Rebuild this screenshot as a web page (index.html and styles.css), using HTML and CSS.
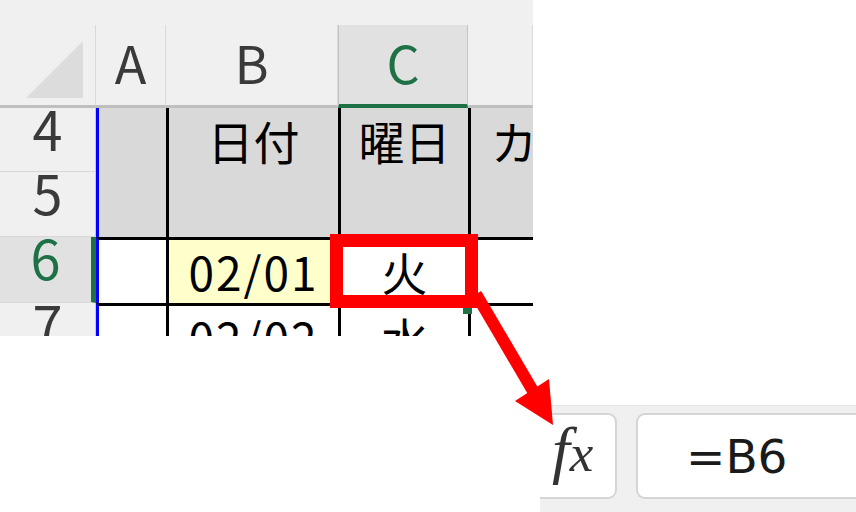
FILE: index.html
```html
<!DOCTYPE html>
<html lang="ja">
<head>
<meta charset="utf-8">
<title>Excel formula</title>
<link rel="stylesheet" href="styles.css">
</head>
<body>
<div class="page">
  <div class="sheet">
    <div class="strip"></div>
    <div class="corner"><svg class="tri" viewBox="0 0 57 57"><polygon points="0,57 57,57 57,0" fill="#dcdcdc"/></svg></div>
    <div class="colhdr">A</div>
    <div class="colhdr">B</div>
    <div class="colhdr sel">C</div>
    <div class="colhdr"></div>

    <div class="rowhdr">4</div>
    <div class="cell a merged"></div>
    <div class="cell b merged">日付</div>
    <div class="cell c merged">曜日</div>
    <div class="cell d merged">カレンダー</div>
    <div class="rowhdr">5</div>

    <div class="rowhdr sel">6</div>
    <div class="cell a rule"></div>
    <div class="cell b rule yellow"><span class="num">02/01</span></div>
    <div class="cell c rule">火</div>
    <div class="cell d rule"></div>

    <div class="rowhdr">7</div>
    <div class="cell a rule"></div>
    <div class="cell b rule"><span class="num">02/02</span></div>
    <div class="cell c rule">水</div>
    <div class="cell d rule"></div>
  </div>

  <div class="fbar">
    <div class="fxbox"><span class="fx"><span class="f">f</span><span class="x">x</span></span></div>
    <div class="fbox">=B6</div>
  </div>

  <svg class="overlay" width="856" height="512" viewBox="0 0 856 512">
    <rect x="463" y="306" width="9" height="8" fill="#1e7145"/>
    <rect x="336.5" y="240.5" width="135" height="61" fill="none" stroke="#ff0000" stroke-width="13"/>
    <line x1="476" y1="294" x2="533" y2="391" stroke="#ff0000" stroke-width="12"/>
    <polygon points="515,401 549,379 553,425" fill="#ff0000"/>
  </svg>
</div>
</body>
</html>
```
FILE: styles.css
```css
* {
  box-sizing: border-box;
  margin: 0;
  padding: 0;
}

html, body {
  width: 856px;
  height: 512px;
  background: #ffffff;
  overflow: hidden;
}

body {
  font-family: "Noto Sans CJK JP", "Noto Sans", sans-serif;
}

.page {
  position: relative;
  width: 856px;
  height: 512px;
}

/* spreadsheet */
.sheet {
  display: grid;
  grid-template-columns: 96px 70px 172px 130px 65px;
  grid-template-rows: 25px 83px 64px 65px 66px 66px;
  width: 533px;
  height: 336px;
  overflow: hidden;
  background: #f0f0f0;
}

.strip {
  grid-column: 1 / -1;
}

.corner {
  display: flex;
  align-items: flex-end;
  justify-content: flex-end;
  padding: 0 12px 7px 0;
  border-right: 1px solid #d9d9d9;
  border-bottom: 3px solid #bfbfbf;
}

.tri {
  display: block;
  width: 57px;
  height: 57px;
}

.colhdr {
  font-size: 52px;
  line-height: 74px;
  text-align: center;
  color: #3a3a3a;
  border-right: 1px solid #dadada;
  border-bottom: 3px solid #bfbfbf;
}

.colhdr.sel {
  background: #e1e1e1;
  color: #1e7145;
  border-left: 1px solid #c4c4c4;
  border-right: 1px solid #c4c4c4;
  border-bottom: 4px solid #1e7145;
}

.rowhdr {
  font-size: 54px;
  line-height: 40px;
  text-align: center;
  color: #3a3a3a;
  border-right: 1px solid #c8c8c8;
  border-bottom: 1px solid #d8d8d8;
}

.rowhdr.sel {
  background: #e1e1e1;
  color: #1e7145;
  border-right: 5px solid #1e7145;
}

.cell {
  background: #ffffff;
  border-left: 3px solid #000000;
  font-size: 46px;
  line-height: 62px;
  text-align: center;
  color: #000000;
  white-space: nowrap;
  overflow: hidden;
}

.cell.a {
  border-left-color: #0000ff;
}

.merged {
  grid-row: span 2;
  background: #d9d9d9;
  line-height: 64px;
}

.cell.d.merged {
  text-align: left;
  padding-left: 20px;
}

.rule {
  border-top: 3px solid #000000;
}

.yellow {
  background: #ffffcc;
}

.num {
  letter-spacing: 2px;
}

/* formula bar */
.fbar {
  display: flex;
  gap: 19px;
  width: 316px;
  height: 107px;
  margin: 69px 0 0 540px;
  padding-top: 7px;
  background: #f0f0f0;
  border-top: 1px solid #e4e4e4;
  overflow: hidden;
}

.fxbox {
  flex: none;
  width: 77px;
  height: 86px;
  padding: 3px 0 0 12px;
  background: #ffffff;
  border: 2px solid #d5d5d5;
  border-left: 0;
  border-radius: 0 9px 9px 0;
  font-family: "Liberation Serif", serif;
  font-style: italic;
  color: #333333;
}

.fx {
  font-size: 64px;
  line-height: 1;
  white-space: nowrap;
}

.fx .x {
  font-size: 53px;
}

.fbox {
  flex: 1;
  height: 86px;
  display: flex;
  align-items: center;
  padding-left: 48px;
  background: #ffffff;
  border: 2px solid #d5d5d5;
  border-right: 0;
  border-radius: 9px 0 0 9px;
  font-family: "DejaVu Sans", sans-serif;
  font-size: 47px;
  color: #1a1a1a;
}

.overlay {
  position: absolute;
  left: 0;
  top: 0;
  pointer-events: none;
}
```
